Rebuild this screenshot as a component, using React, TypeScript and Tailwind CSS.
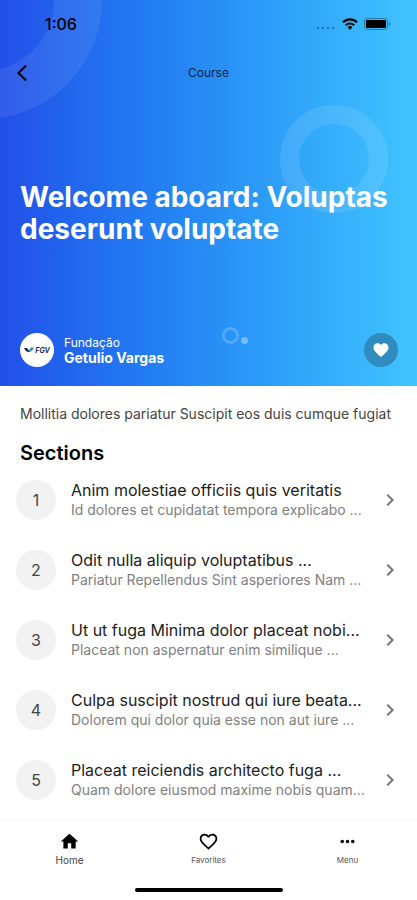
import {
  MdArrowBackIosNew,
  MdChevronRight,
  MdFavorite,
  MdFavoriteBorder,
  MdHome,
  MdMoreHoriz,
} from "react-icons/md";

type Section = {
  id: number;
  title: string;
  description: string;
};

const sections: Section[] = [
  {
    id: 1,
    title: "Anim molestiae officiis quis veritatis",
    description: "Id dolores et cupidatat tempora explicabo ...",
  },
  {
    id: 2,
    title: "Odit nulla aliquip voluptatibus ...",
    description: "Pariatur Repellendus Sint asperiores Nam ...",
  },
  {
    id: 3,
    title: "Ut ut fuga Minima dolor placeat nobi...",
    description: "Placeat non aspernatur enim similique ...",
  },
  {
    id: 4,
    title: "Culpa suscipit nostrud qui iure beata...",
    description: "Dolorem qui dolor quia esse non aut iure ...",
  },
  {
    id: 5,
    title: "Placeat reiciendis architecto fuga ...",
    description: "Quam dolore eiusmod maxime nobis quam...",
  },
];

const StatusBar = () => {
  return (
    <div className="flex h-12 items-center justify-between pr-[26px] pl-[45px] text-black">
      <span className="text-base font-medium">1:06</span>
      <div className="flex items-center gap-[6px]">
        <svg width="20" height="14" viewBox="0 0 20 14" aria-hidden="true">
          <g fill="#000" opacity="0.3">
            <circle cx="2" cy="11" r="1.2" />
            <circle cx="7" cy="11" r="1.2" />
            <circle cx="12" cy="11" r="1.2" />
            <circle cx="17" cy="11" r="1.2" />
          </g>
        </svg>
        <svg width="16" height="12" viewBox="0 0 16 12" aria-hidden="true">
          <path d="M1 4.3a10 10 0 0 1 14 0" fill="none" stroke="#000" strokeWidth="2.2" />
          <path d="M3.7 7.2a6.2 6.2 0 0 1 8.6 0" fill="none" stroke="#000" strokeWidth="2" />
          <path d="M5.6 9.2a3.5 3.5 0 0 1 4.8 0L8 11.8z" fill="#000" />
        </svg>
        <svg width="27" height="12" viewBox="0 0 27 12" aria-hidden="true">
          <rect x="0.5" y="0.5" width="23" height="11" rx="2.5" fill="none" stroke="#000" strokeOpacity="0.35" />
          <rect x="2" y="2" width="20" height="8" rx="1" fill="#000" />
          <path d="M25 4v4c1.6-.6 1.6-3.4 0-4z" fill="#000" opacity="0.4" />
        </svg>
      </div>
    </div>
  );
};

const Rings = () => {
  return (
    <div className="pointer-events-none absolute inset-0 overflow-hidden">
      <span className="absolute -top-[119px] -left-[136px] size-[238px] rounded-full border-[48px] border-white/8" />
      <span className="absolute top-[105px] right-[29px] size-[108px] rounded-full border-[19px] border-white/10" />
      <span className="absolute top-[327px] left-[222px] size-[17px] rounded-full border-[3px] border-white/20" />
      <span className="absolute top-[337px] left-[241px] size-[7px] rounded-full bg-white/35" />
    </div>
  );
};

const Logo = () => {
  return (
    <span className="flex size-[34px] items-center justify-center gap-px rounded-full bg-white">
      <svg width="10" height="6" viewBox="0 0 10 6" aria-hidden="true">
        <path d="M0 1h3l3 4H4Q1.500 4.500 0 1z" fill="#12264f" />
        <path d="M5 3l2-2.500h3Q8.500 4 6 5z" fill="#2f8fb5" />
      </svg>
      <span className="text-[7px] leading-none font-bold text-[#1c2c55] italic">
        FGV
      </span>
    </span>
  );
};

const Hero = () => {
  return (
    <header className="relative bg-linear-to-r from-[#234fe8] to-[#41c4ff]">
      <Rings />
      <div className="relative">
        <StatusBar />
        <div className="grid h-[50px] grid-cols-3 items-center px-3">
          <button type="button" aria-label="Back" className="w-5 text-black">
            <MdArrowBackIosNew size={20} />
          </button>
          <span className="text-center text-xs text-[#0d2347]">Course</span>
        </div>
        <h1 className="px-5 pt-[83px] text-[28px] leading-8 font-bold text-white">
          Welcome aboard: Voluptas deserunt voluptate
        </h1>
        <div className="flex items-center pt-[88px] pr-[19px] pb-[19px] pl-5">
          <Logo />
          <div className="ml-[10px] text-white">
            <p className="text-xs leading-[15px]">Fundação</p>
            <p className="text-sm leading-[15px] font-bold">Getulio Vargas</p>
          </div>
          <button
            type="button"
            aria-label="Add to favorites"
            className="ml-auto flex size-[34px] items-center justify-center rounded-full bg-[#308bbf] text-white"
          >
            <MdFavorite size={18} />
          </button>
        </div>
      </div>
    </header>
  );
};

const SectionRow = ({ section }: { section: Section }) => {
  return (
    <li>
      <a href={`#section-${section.id}`} className="flex h-[70px] items-center">
        <span className="flex size-10 shrink-0 items-center justify-center rounded-full bg-[#f2f2f2] text-base text-[#444]">
          {section.id}
        </span>
        <span className="ml-[15px] min-w-0 flex-1 whitespace-nowrap">
          <span className="block text-base leading-5 text-[#222]">
            {section.title}
          </span>
          <span className="block text-sm leading-5 text-[#808080]">
            {section.description}
          </span>
        </span>
        <MdChevronRight size={24} className="shrink-0 text-[#757575]" />
      </a>
    </li>
  );
};

const BottomNav = () => {
  return (
    <nav className="sticky bottom-0 border-t border-[#f7f7f7] bg-white">
      <div className="grid h-[68px] grid-cols-3 pt-[11px]">
        <a href="#home" className="flex flex-col items-center text-black">
          <MdHome size={21} />
          <span className="text-[10px] leading-4 text-[#444]">Home</span>
        </a>
        <a href="#favorites" className="flex flex-col items-center text-black">
          <MdFavoriteBorder size={21} />
          <span className="text-[8px] leading-4 text-[#555]">Favorites</span>
        </a>
        <a href="#menu" className="flex flex-col items-center text-black">
          <MdMoreHoriz size={21} />
          <span className="text-[8px] leading-4 text-[#555]">Menu</span>
        </a>
      </div>
      <div className="pb-2">
        <div className="mx-auto h-1 w-[148px] rounded-full bg-black" />
      </div>
    </nav>
  );
};

const App = () => {
  return (
    <div className="flex min-h-screen flex-col bg-white font-['Inter',sans-serif]">
      <Hero />
      <main className="flex-1">
        <p className="px-5 pt-[18px] text-sm leading-5 text-[#444]">
          Mollitia dolores pariatur Suscipit eos duis cumque fugiat
        </p>
        <h2 className="px-5 pt-[17px] text-xl leading-6 font-semibold text-black">
          Sections
        </h2>
        <ul className="pr-[15px] pl-4">
          {sections.map((section) => (
            <SectionRow key={section.id} section={section} />
          ))}
        </ul>
      </main>
      <BottomNav />
    </div>
  );
};

export default App;
